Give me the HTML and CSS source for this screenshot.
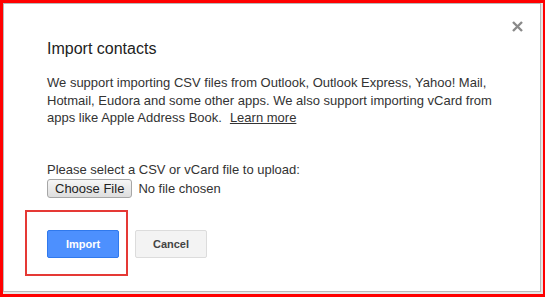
FILE: index.html
```html
<!DOCTYPE html>
<html lang="en">
<head>
  <meta charset="UTF-8" />
  <title>Import contacts</title>
  <link rel="stylesheet" href="styles.css">
</head>
<body>
  <div class="dialog">
    <button class="close" aria-label="Close">
      <svg width="11" height="11" viewBox="0 0 11 11"><path d="M1 1L10 10M10 1L1 10" stroke="#8a8a8a" stroke-width="2.4"/></svg>
    </button>
    <h1 class="title">Import contacts</h1>
    <p class="intro">
      We support importing CSV files from Outlook, Outlook Express, Yahoo! Mail,
      Hotmail, Eudora and some other apps. We also support importing vCard from
      apps like Apple Address Book.<a href="#" class="learn">Learn more</a>
    </p>
    <div class="upload">
      <div class="upload-label">Please select a CSV or vCard file to upload:</div>
      <div class="file-row">
        <span class="file-btn">Choose File</span>
        <span class="file-name">No file chosen</span>
      </div>
    </div>
    <div class="actions">
      <div class="highlight">
        <button class="btn btn-primary">Import</button>
      </div>
      <button class="btn btn-default">Cancel</button>
    </div>
  </div>
</body>
</html>
```

FILE: styles.css
```css
html, body {
  height: 100%;
}

body {
  margin: 0;
  background-color: #ff0000;
  font-family: "Liberation Sans", Arial, sans-serif;
  overflow: hidden;
}

.dialog {
  position: relative;
  box-sizing: border-box;
  width: 538px;
  height: 289px;
  margin: 3px 0 0 3px;
  background-color: #fff;
  border: 1px solid #b9b9b9;
  box-shadow: 1px 1px 0 1px #e6e6e6;
  padding: 34px 20px 0 43px;
  color: #222;
}

.close {
  position: absolute;
  top: 13px;
  right: 13px;
  width: 19px;
  height: 19px;
  padding: 0;
  border: none;
  background: none;
  display: flex;
  align-items: center;
  justify-content: center;
}

.title {
  margin: 0;
  font-size: 16px;
  font-weight: normal;
  line-height: 22px;
  color: #222;
}

.intro {
  margin: 14px 0 0;
  font-size: 13px;
  line-height: 17.5px;
  color: #333;
}

.intro .learn {
  margin-left: 8px;
  color: #333;
}

.upload {
  margin-top: 35px;
  font-size: 13px;
  color: #333;
}

.upload-label {
  line-height: 16px;
}

.file-row {
  display: flex;
  align-items: center;
  margin-top: 1px;
}

.file-btn {
  display: inline-block;
  box-sizing: border-box;
  height: 19px;
  padding: 0 7px;
  border: 1px solid #a6a6a6;
  border-radius: 3px;
  background: linear-gradient(#f6f6f6, #dedede);
  font-size: 13px;
  line-height: 17px;
  color: #222;
}

.file-name {
  margin-left: 6px;
}

.actions {
  display: flex;
  align-items: center;
  margin: 12px 0 0 -22px;
}

.highlight {
  box-sizing: border-box;
  width: 103px;
  height: 66px;
  border: 2px solid #e53935;
  padding: 3px 0 0 20px;
  display: flex;
  align-items: center;
}

.btn {
  box-sizing: border-box;
  width: 72px;
  height: 28px;
  border-radius: 2px;
  font-family: inherit;
  font-size: 11px;
  font-weight: bold;
  padding: 0;
}

.btn-primary {
  background-color: #4d90fe;
  border: 1px solid #3079ed;
  color: #fff;
}

.btn-default {
  margin: 3px 0 0 7px;
  background-color: #f3f3f3;
  border: 1px solid #dcdcdc;
  color: #444;
}
```
